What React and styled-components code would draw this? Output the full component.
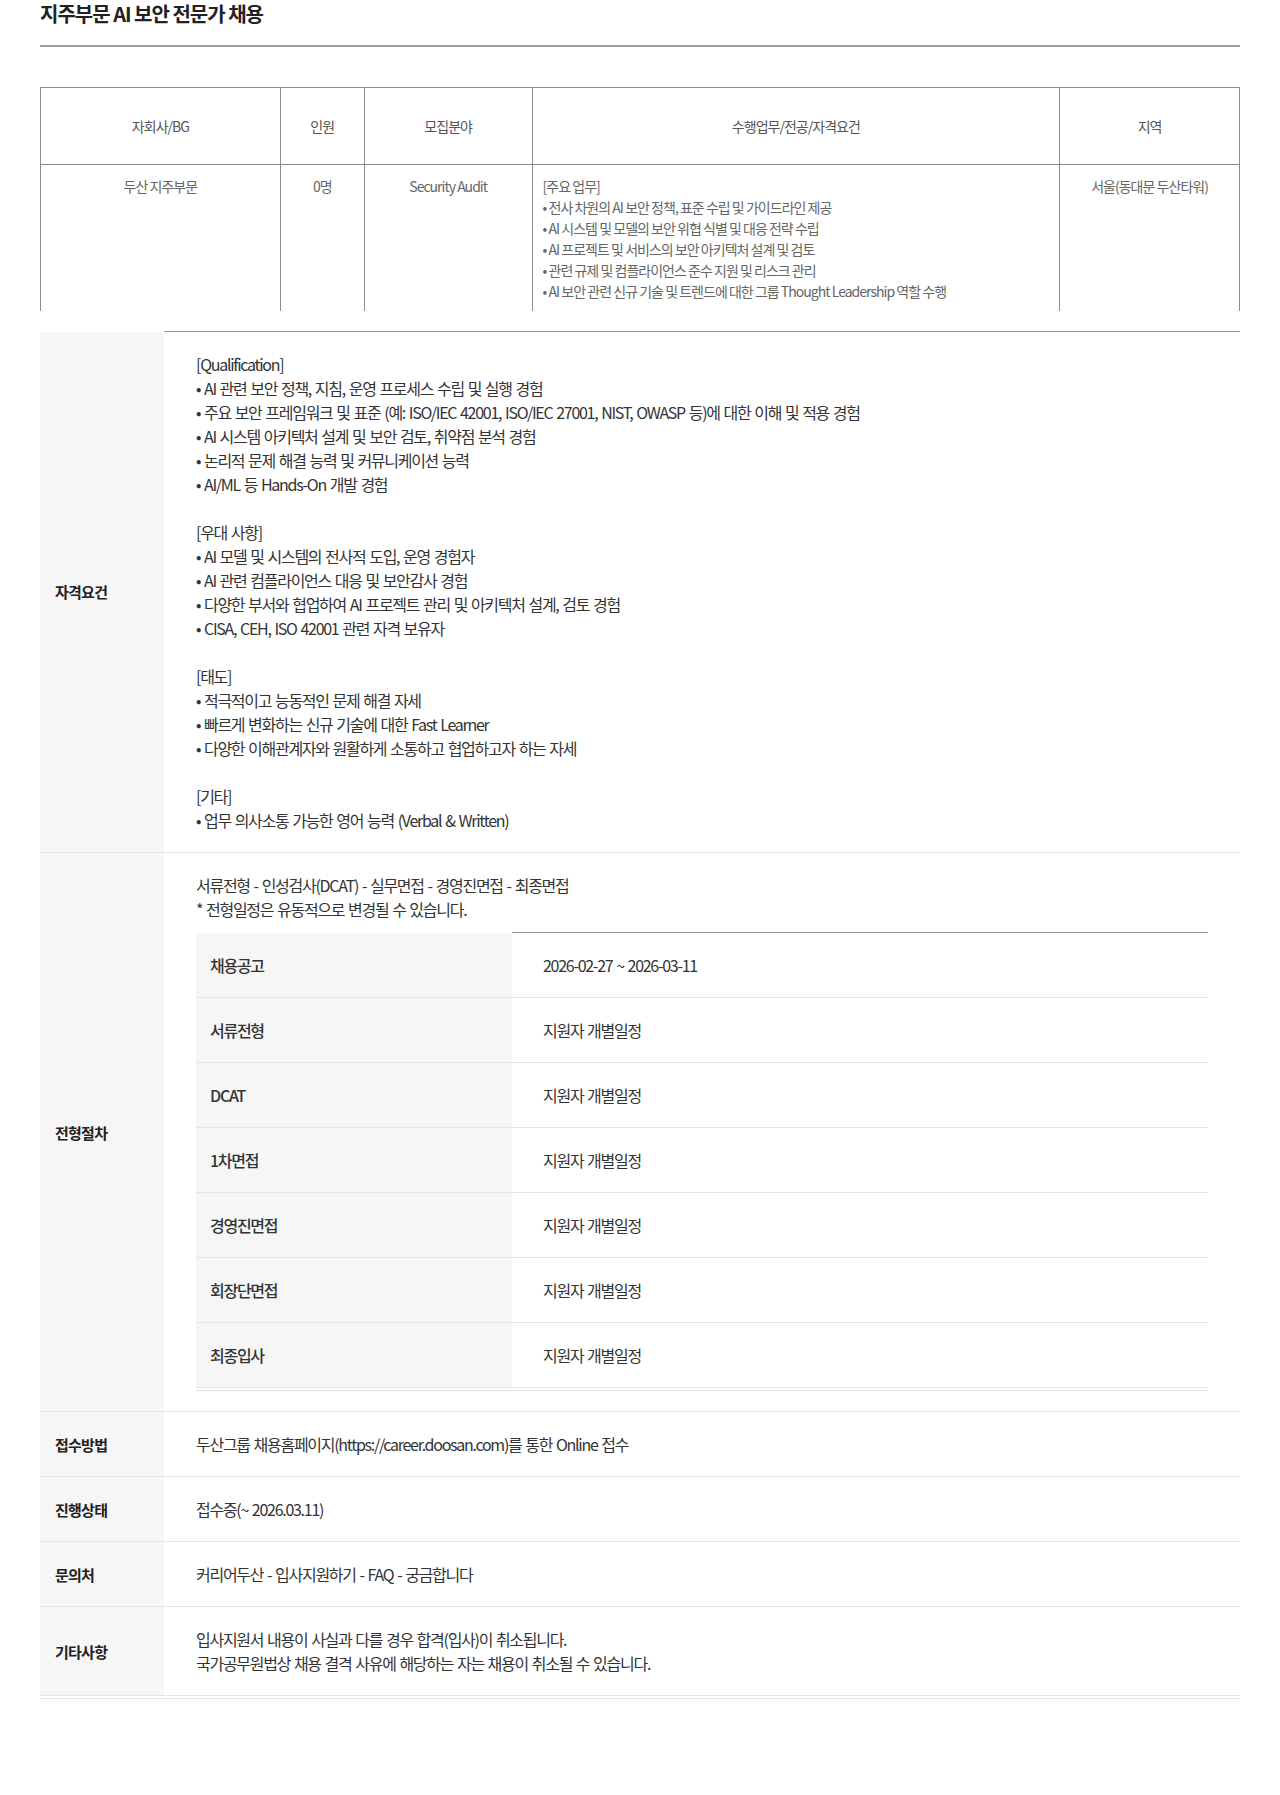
import React from 'react';
import styled, { createGlobalStyle } from 'styled-components';

const GlobalStyle = createGlobalStyle`
  body {
    margin: 0;
    background: #fff;
    font-family: "Noto Sans CJK KR", "Noto Sans", sans-serif;
    color: #333;
  }
`;

const Page = styled.div`
  width: 1200px;
  padding: 0 40px 89px;
`;

const Title = styled.h2`
  margin: 0;
  padding-bottom: 17px;
  font-size: 20px;
  line-height: 28px;
  font-weight: 700;
  letter-spacing: -0.05em;
  color: #222;
  border-bottom: 2px solid #999;
`;

const SummaryTable = styled.table`
  width: 100%;
  margin-top: 40px;
  border-collapse: collapse;
  table-layout: fixed;
`;

const HeadCell = styled.th`
  height: 76px;
  padding: 0 10px;
  font-size: 14px;
  font-weight: 400;
  color: #555;
  letter-spacing: -0.07em;
  border: 1px solid #8c8c8c;
`;

const BodyCell = styled.td`
  padding: 11px 10px 9px;
  vertical-align: top;
  text-align: ${p => p.$align || 'center'};
  font-size: 14px;
  line-height: 21px;
  color: #666;
  letter-spacing: -0.07em;
  border-left: 1px solid #8c8c8c;
  border-right: 1px solid #8c8c8c;
`;

const DetailWrap = styled.div`
  margin-top: 20px;
  padding-bottom: 2px;
  border-bottom: 1px solid #e5e5e5;
`;

const DetailTable = styled.table`
  width: 100%;
  border-collapse: collapse;
  table-layout: fixed;

  tr:first-child > td {
    border-top: 1px solid #999;
  }
`;

const Label = styled.th`
  width: 124px;
  padding: 0 0 0 15px;
  box-sizing: border-box;
  background: #f6f6f6;
  text-align: left;
  vertical-align: middle;
  font-size: 15px;
  font-weight: 700;
  color: #222;
  letter-spacing: -0.05em;
  border-bottom: 1px solid #e5e5e5;
`;

const Content = styled.td`
  padding: 20px 32px;
  vertical-align: top;
  font-size: 16px;
  line-height: 24px;
  color: #333;
  letter-spacing: -0.08em;
  word-spacing: 1.5px;
  border-bottom: 1px solid #e5e5e5;
`;

const Line = styled.div`
  min-height: ${p => (p.$blank ? '24px' : 'auto')};
`;

const ScheduleWrap = styled.div`
  margin-top: 11px;
  padding-bottom: 2px;
  border-bottom: 1px solid #e5e5e5;
`;

const ScheduleTable = styled.table`
  width: 100%;
  border-collapse: collapse;
  table-layout: fixed;

  tr:first-child > td {
    border-top: 1px solid #999;
  }
`;

const StepName = styled.th`
  width: 316px;
  padding: 20px 14px;
  box-sizing: border-box;
  background: #f6f6f6;
  text-align: left;
  font-size: 16px;
  line-height: 24px;
  font-weight: 500;
  color: #333;
  letter-spacing: -0.08em;
  border-bottom: 1px solid #e5e5e5;
`;

const StepDate = styled.td`
  padding: 20px 31px;
  font-size: 16px;
  line-height: 24px;
  color: #333;
  letter-spacing: -0.08em;
  word-spacing: 1.5px;
  border-bottom: 1px solid #e5e5e5;
`;

const duties = [
  '[주요 업무]',
  '• 전사 차원의 AI 보안 정책, 표준 수립 및 가이드라인 제공',
  '• AI 시스템 및 모델의 보안 위협 식별 및 대응 전략 수립',
  '• AI 프로젝트 및 서비스의 보안 아키텍처 설계 및 검토',
  '• 관련 규제 및 컴플라이언스 준수 지원 및 리스크 관리',
  '• AI 보안 관련 신규 기술 및 트렌드에 대한 그룹 Thought Leadership 역할 수행',
];

const qualification = [
  '[Qualification]',
  '• AI 관련 보안 정책, 지침, 운영 프로세스 수립 및 실행 경험',
  '• 주요 보안 프레임워크 및 표준 (예: ISO/IEC 42001, ISO/IEC 27001, NIST, OWASP 등)에 대한 이해 및 적용 경험',
  '• AI 시스템 아키텍처 설계 및 보안 검토, 취약점 분석 경험',
  '• 논리적 문제 해결 능력 및 커뮤니케이션 능력',
  '• AI/ML 등 Hands-On 개발 경험',
  '',
  '[우대 사항]',
  '• AI 모델 및 시스템의 전사적 도입, 운영 경험자',
  '• AI 관련 컴플라이언스 대응 및 보안감사 경험',
  '• 다양한 부서와 협업하여 AI 프로젝트 관리 및 아키텍처 설계, 검토 경험',
  '• CISA, CEH, ISO 42001 관련 자격 보유자',
  '',
  '[태도]',
  '• 적극적이고 능동적인 문제 해결 자세',
  '• 빠르게 변화하는 신규 기술에 대한 Fast Learner',
  '• 다양한 이해관계자와 원활하게 소통하고 협업하고자 하는 자세',
  '',
  '[기타]',
  '• 업무 의사소통 가능한 영어 능력 (Verbal & Written)',
];

const schedule = [
  ['채용공고', '2026-02-27 ~ 2026-03-11'],
  ['서류전형', '지원자 개별일정'],
  ['DCAT', '지원자 개별일정'],
  ['1차면접', '지원자 개별일정'],
  ['경영진면접', '지원자 개별일정'],
  ['회장단면접', '지원자 개별일정'],
  ['최종입사', '지원자 개별일정'],
];

const Lines = ({ items }) =>
  items.map((text, i) => (
    <Line key={i} $blank={!text}>
      {text}
    </Line>
  ));

const App = () => (
  <Page>
    <GlobalStyle />
    <Title>지주부문 AI 보안 전문가 채용</Title>

    <SummaryTable>
      <colgroup>
        <col style={{ width: '20%' }} />
        <col style={{ width: '7%' }} />
        <col style={{ width: '14%' }} />
        <col style={{ width: '44%' }} />
        <col style={{ width: '15%' }} />
      </colgroup>
      <thead>
        <tr>
          <HeadCell>자회사/BG</HeadCell>
          <HeadCell>인원</HeadCell>
          <HeadCell>모집분야</HeadCell>
          <HeadCell>수행업무/전공/자격요건</HeadCell>
          <HeadCell>지역</HeadCell>
        </tr>
      </thead>
      <tbody>
        <tr>
          <BodyCell>두산 지주부문</BodyCell>
          <BodyCell>0명</BodyCell>
          <BodyCell>Security Audit</BodyCell>
          <BodyCell $align="left">
            <Lines items={duties} />
          </BodyCell>
          <BodyCell>서울(동대문 두산타워)</BodyCell>
        </tr>
      </tbody>
    </SummaryTable>

    <DetailWrap>
      <DetailTable>
        <tbody>
          <tr>
            <Label>자격요건</Label>
            <Content>
              <Lines items={qualification} />
            </Content>
          </tr>
          <tr>
            <Label>전형절차</Label>
            <Content>
              <Line>서류전형 - 인성검사(DCAT) - 실무면접 - 경영진면접 - 최종면접</Line>
              <Line>* 전형일정은 유동적으로 변경될 수 있습니다.</Line>
              <ScheduleWrap>
                <ScheduleTable>
                  <tbody>
                    {schedule.map(([name, date]) => (
                      <tr key={name}>
                        <StepName>{name}</StepName>
                        <StepDate>{date}</StepDate>
                      </tr>
                    ))}
                  </tbody>
                </ScheduleTable>
              </ScheduleWrap>
            </Content>
          </tr>
          <tr>
            <Label>접수방법</Label>
            <Content>두산그룹 채용홈페이지(https://career.doosan.com)를 통한 Online 접수</Content>
          </tr>
          <tr>
            <Label>진행상태</Label>
            <Content>접수중(~ 2026.03.11)</Content>
          </tr>
          <tr>
            <Label>문의처</Label>
            <Content>커리어두산 - 입사지원하기 - FAQ - 궁금합니다</Content>
          </tr>
          <tr>
            <Label>기타사항</Label>
            <Content>
              <Line>입사지원서 내용이 사실과 다를 경우 합격(입사)이 취소됩니다.</Line>
              <Line>국가공무원법상 채용 결격 사유에 해당하는 자는 채용이 취소될 수 있습니다.</Line>
            </Content>
          </tr>
        </tbody>
      </DetailTable>
    </DetailWrap>
  </Page>
);

export default App;
